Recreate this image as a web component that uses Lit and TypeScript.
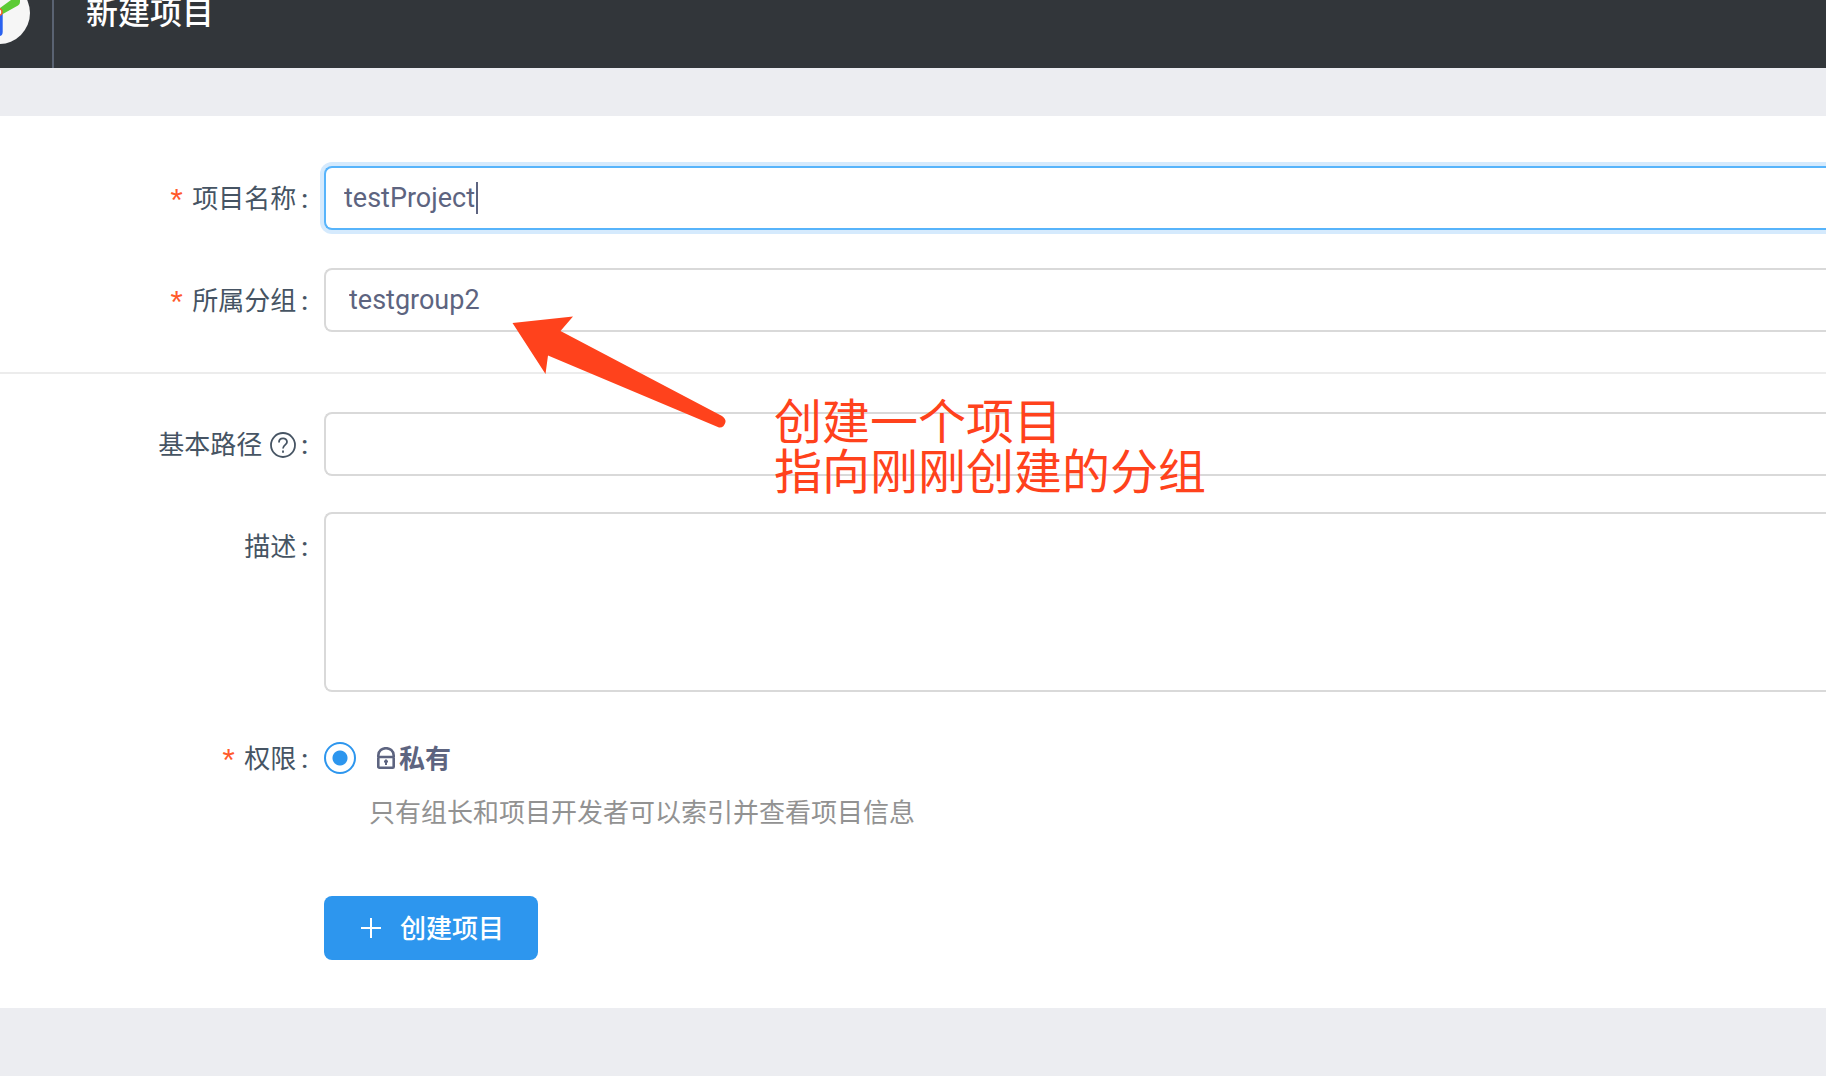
import { LitElement, html, css } from "lit";
import { customElement, state } from "lit/decorators.js";

@customElement("app-root")
export class AppRoot extends LitElement {
  static styles = css`
    :host {
      display: block;
      min-height: 100vh;
      background: #ecedf1;
      color: #5d6480;
      font-family: Roboto, "Noto Sans CJK SC", sans-serif;
      font-size: 26px;
      line-height: 40px;
      overflow: hidden;
      position: relative;
    }
    * {
      box-sizing: border-box;
    }
    .header {
      display: flex;
      height: 68px;
      background: #32363a;
      color: #fff;
    }
    .brand {
      display: block;
      width: 54px;
      border-right: 2px solid #5a6372;
    }
    .brand svg {
      display: block;
    }
    .title {
      margin: 0;
      padding-left: 32px;
      font-size: 32px;
      font-weight: 500;
      line-height: 26px;
    }
    .card {
      margin: 48px 0 68px;
      padding: 50px 0 48px;
      background: #fff;
    }
    .row {
      display: grid;
      grid-template-columns: 324px minmax(0, 1fr);
      align-items: start;
    }
    .row + .row {
      margin-top: 38px;
    }
    .row.tight {
      margin-top: 36px;
    }
    .row.access {
      margin-top: 34px;
    }
    .label {
      display: flex;
      justify-content: flex-end;
      align-items: center;
      height: 64px;
      padding: 2px 16px 0 0;
      color: #465463;
    }
    .tight .label {
      height: 68px;
    }
    .label::after {
      content: ":";
      margin-left: 5px;
      font-weight: 500;
    }
    .required::before {
      content: "*";
      padding-top: 10px;
      margin-right: 6px;
      color: #ff5a2b;
      font-family: "Liberation Mono", monospace;
      font-size: 32px;
    }
    .help {
      margin-left: 8px;
      display: block;
    }
    .control {
      display: block;
      width: 100%;
      height: 64px;
      margin: 0;
      padding: 0 18px;
      border: 2px solid #d9d9d9;
      border-right: 0;
      border-radius: 8px 0 0 8px;
      outline: none;
      appearance: none;
      background: #fff;
      color: inherit;
      font: inherit;
      font-size: 27px;
    }
    select.control {
      padding: 0 23px;
    }
    textarea.control {
      height: 180px;
      resize: none;
    }
    .active {
      border-color: #57b4fb;
      box-shadow: 0 0 0 4px #d5eafd;
      caret-color: transparent;
      background: linear-gradient(#5d6480, #5d6480) 150px 14px / 2px 32px no-repeat #fff;
    }
    .divider {
      height: 2px;
      margin: 40px 0 38px;
      border: 0;
      background: #ececec;
    }
    .choice {
      display: flex;
      align-items: center;
      height: 64px;
      font-weight: 700;
    }
    .choice-text {
      padding-top: 2px;
    }
    .radio {
      appearance: none;
      width: 32px;
      height: 32px;
      margin: 0 20px 0 0;
      border: 2px solid #2d96ee;
      border-radius: 50%;
      background: radial-gradient(circle, #2d96ee 7px, #fff 8px);
    }
    .lock {
      display: block;
      margin: 0 4px 0 1px;
    }
    .hint {
      margin: 3px 0 0;
      padding-left: 45px;
      color: #929292;
    }
    .submit {
      display: flex;
      align-items: center;
      gap: 19px;
      height: 64px;
      margin: 63px 0 0 324px;
      padding: 0 34px 0 37px;
      border: 0;
      border-radius: 8px;
      background: #2d96ee;
      color: #fff;
      font: inherit;
      font-weight: 500;
    }
    .submit-text {
      padding-top: 2px;
    }
    .note {
      position: absolute;
      left: 774px;
      top: 398px;
      margin: 0;
      color: #ff421c;
      font-size: 48px;
      line-height: 50px;
      white-space: nowrap;
      pointer-events: none;
    }
    .arrow {
      position: absolute;
      left: 512px;
      top: 316px;
      pointer-events: none;
    }
  `;

  @state() private name = "testProject";

  render() {
    return html`
      <header class="header">
        <a class="brand" href="#" aria-label="首页">
          <svg width="52" height="68" viewBox="0 0 52 68">
            <circle cx="-1" cy="13" r="31" fill="#f6f6f6" />
            <path d="M-4 14H2.700V32Q2.700 36 -1 36H-4Z" fill="#2a62f0" />
            <path d="M0 8L11 0H20V2Q20 4.500 18 5.500L1 15Z" fill="#5ccb35" />
            <circle cx="-1.500" cy="12" r="3.500" fill="#fff" stroke="#f4552c" stroke-width="1.5" />
          </svg>
        </a>
        <h1 class="title">新建项目</h1>
      </header>

      <form class="card" @submit=${(e: Event) => e.preventDefault()}>
        <div class="row">
          <label class="label required" for="name">项目名称</label>
          <input
            id="name"
            class="control active"
            type="text"
            .value=${this.name}
            @input=${(e: Event) => (this.name = (e.target as HTMLInputElement).value)}
          />
        </div>
        <div class="row">
          <label class="label required" for="group">所属分组</label>
          <select id="group" class="control">
            <option>testgroup2</option>
          </select>
        </div>
        <hr class="divider" />
        <div class="row">
          <label class="label" for="path">
            基本路径
            <svg class="help" width="26" height="26" viewBox="0 0 26 26" fill="none" stroke="#465463" stroke-width="1.8">
              <circle cx="13" cy="13" r="12" />
              <path d="M9 10.500C9 5.200 17 5.200 17 10C17 13 13 12.800 13 16.500" />
              <path d="M13 18.500V20.700" />
            </svg>
          </label>
          <input id="path" class="control" type="text" />
        </div>
        <div class="row tight">
          <label class="label" for="desc">描述</label>
          <textarea id="desc" class="control"></textarea>
        </div>
        <div class="row access">
          <label class="label required" for="private">权限</label>
          <div>
            <label class="choice">
              <input id="private" class="radio" type="radio" name="access" checked />
              <svg class="lock" width="18" height="22" viewBox="0 0 18 22" fill="none" stroke="#5d6480" stroke-width="2.6">
                <path d="M1.300 10V8.500C1.300 -1.200 16.700 -1.200 16.700 8.500V10" />
                <rect x="1.300" y="10" width="15.400" height="10.700" rx="1" />
                <path d="M9 12.500V18M7 14.500H11" stroke-width="2" />
              </svg>
              <span class="choice-text">私有</span>
            </label>
            <p class="hint">只有组长和项目开发者可以索引并查看项目信息</p>
          </div>
        </div>
        <button class="submit" type="submit">
          <svg width="20" height="20" viewBox="0 0 20 20" stroke="#fff" stroke-width="2">
            <path d="M10 0V20M0 10H20" />
          </svg>
          <span class="submit-text">创建项目</span>
        </button>
      </form>

      <svg class="arrow" width="216" height="114" viewBox="0 0 216 114">
        <path
          d="M.5 7L61 .5L48.500 15L210 100Q214 103 213.500 106Q212 112 207 111.500L36 39.500L33.500 58Z"
          fill="#ff421c"
        />
      </svg>
      <p class="note">创建一个项目<br />指向刚刚创建的分组</p>
    `;
  }
}
